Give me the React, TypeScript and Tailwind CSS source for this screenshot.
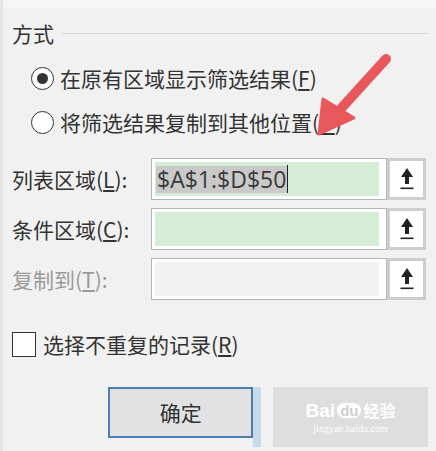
import React from 'react'

const FONT = { fontFamily: '"Noto Sans CJK SC", "Noto Sans", sans-serif' }

function Radio({ checked }: { checked?: boolean }) {
  return (
    <div className="w-[23px] h-[23px] rounded-full border-[1.5px] border-[#333] bg-white flex items-center justify-center shrink-0">
      {checked && <div className="w-[11px] h-[11px] rounded-full bg-[#333]" />}
    </div>
  )
}

function PickButton() {
  return (
    <div className="w-[39px] h-[42px] border-[3px] border-[#cdcdcd] bg-white flex items-center justify-center shrink-0">
      <svg width="16" height="26" viewBox="0 0 16 26">
        <path d="M8 2 L14 11 L10 11 L10 18 L6 18 L6 11 L2 11 Z" fill="#222" />
        <rect x="1.5" y="21.5" width="13" height="1.6" fill="#222" />
      </svg>
    </div>
  )
}

function RangeRow({
  label,
  keyChar,
  value,
  filled,
  disabled,
}: {
  label: string
  keyChar: string
  value?: string
  filled?: boolean
  disabled?: boolean
}) {
  return (
    <div className="flex items-center h-[42px]">
      <div className={`w-[139px] text-[21px] leading-none ${disabled ? 'text-[#9a9a9a]' : 'text-[#333]'}`}>
        {label}(<span className="underline">{keyChar}</span>):
      </div>
      <div className="flex h-[42px] w-[236px] border border-[#b4b4b4] bg-white p-[3px] pr-[7px]">
        <div className={`flex-1 flex items-center pl-[1px] ${filled ? 'bg-[#d5ecd6]' : 'bg-[#f2f2f2]'}`}>
          {value && (
            <span className="flex items-center">
              <span
                className="bg-[#c9c9c9] text-[#3a3a3a] text-[23px] leading-[27px] px-[1px]"
                style={{ fontFamily: '"Open Sans", "Noto Sans", sans-serif' }}
              >
                {value}
              </span>
              <span className="w-px h-[28px] bg-[#222]" />
            </span>
          )}
        </div>
      </div>
      <PickButton />
    </div>
  )
}

export default function App() {
  return (
    <div
      className="relative w-[436px] h-[451px] overflow-hidden bg-[#f1f1f1] text-[#333] border-l-[3px] border-l-[#e6e6e6]"
      style={FONT}
    >
      <div className="h-[8px] bg-[#f6f6f6]" />
      <div className="flex flex-col pl-[9px] pr-[8px] pt-[15px]">
        {/* 方式 */}
        <div className="flex items-center h-[20px]">
          <span className="text-[21px] leading-none">方式</span>
          <div className="flex-1 h-px bg-[#d9d9d9] ml-[8px]" />
        </div>

        <div className="flex flex-col gap-[20px] mt-[23px] pl-[19px]">
          <div className="flex items-center gap-[6px] h-[24px]">
            <Radio checked />
            <span className="text-[21px] leading-none">在原有区域显示筛选结果(<span className="underline">F</span>)</span>
          </div>
          <div className="flex items-center gap-[6px] h-[24px]">
            <Radio />
            <span className="text-[21px] leading-none">将筛选结果复制到其他位置(<span className="underline">O</span>)</span>
          </div>
        </div>

        <div className="flex flex-col gap-[8px] mt-[24px]">
          <RangeRow label="列表区域" keyChar="L" value="$A$1:$D$50" filled />
          <RangeRow label="条件区域" keyChar="C" filled />
          <RangeRow label="复制到" keyChar="T" disabled />
        </div>

        <div className="flex items-center gap-[7px] h-[25px] mt-[32px]">
          <div className="w-[24px] h-[25px] border-[1.5px] border-[#333] bg-white shrink-0" />
          <span className="text-[21px] leading-none">选择不重复的记录(<span className="underline">R</span>)</span>
        </div>

        <div className="flex items-start mt-[30px]">
          <button className="ml-[96px] w-[150px] h-[51px] border-2 border-[#4a80b3] bg-[#e2e2e2] text-[21px] text-[#333] flex items-center justify-center">
            确定
          </button>
          <div className="w-[8px] h-[60px] bg-[#c6dae8]" />
          <div className="ml-[12px] w-[160px] h-[60px] bg-[#dedede] flex flex-col items-center justify-center">
            <div className="flex items-center text-white font-bold text-[19px] leading-none" style={{ fontFamily: '"Liberation Sans", sans-serif' }}>
              <span>Bai</span>
              <span className="ml-[2px] px-[3px] rounded-[8px] bg-white text-[#cfcfcf] text-[15px]">du</span>
              <span className="ml-[2px] text-[16px]" style={FONT}>经验</span>
            </div>
            <div className="text-white text-[10px] leading-none mt-[4px]" style={{ fontFamily: '"Liberation Serif", serif' }}>
              jingyan.baidu.com
            </div>
          </div>
        </div>
      </div>

      {/* red annotation arrow */}
      <svg className="absolute left-0 top-0 pointer-events-none" width="436" height="451">
        <line x1="383" y1="59" x2="334" y2="113" stroke="#e8585b" strokeWidth="10" strokeLinecap="round" />
        <polygon points="316,134 320,99 351,118" fill="#e8585b" stroke="#e8585b" strokeWidth="3" strokeLinejoin="round" />
      </svg>
    </div>
  )
}
